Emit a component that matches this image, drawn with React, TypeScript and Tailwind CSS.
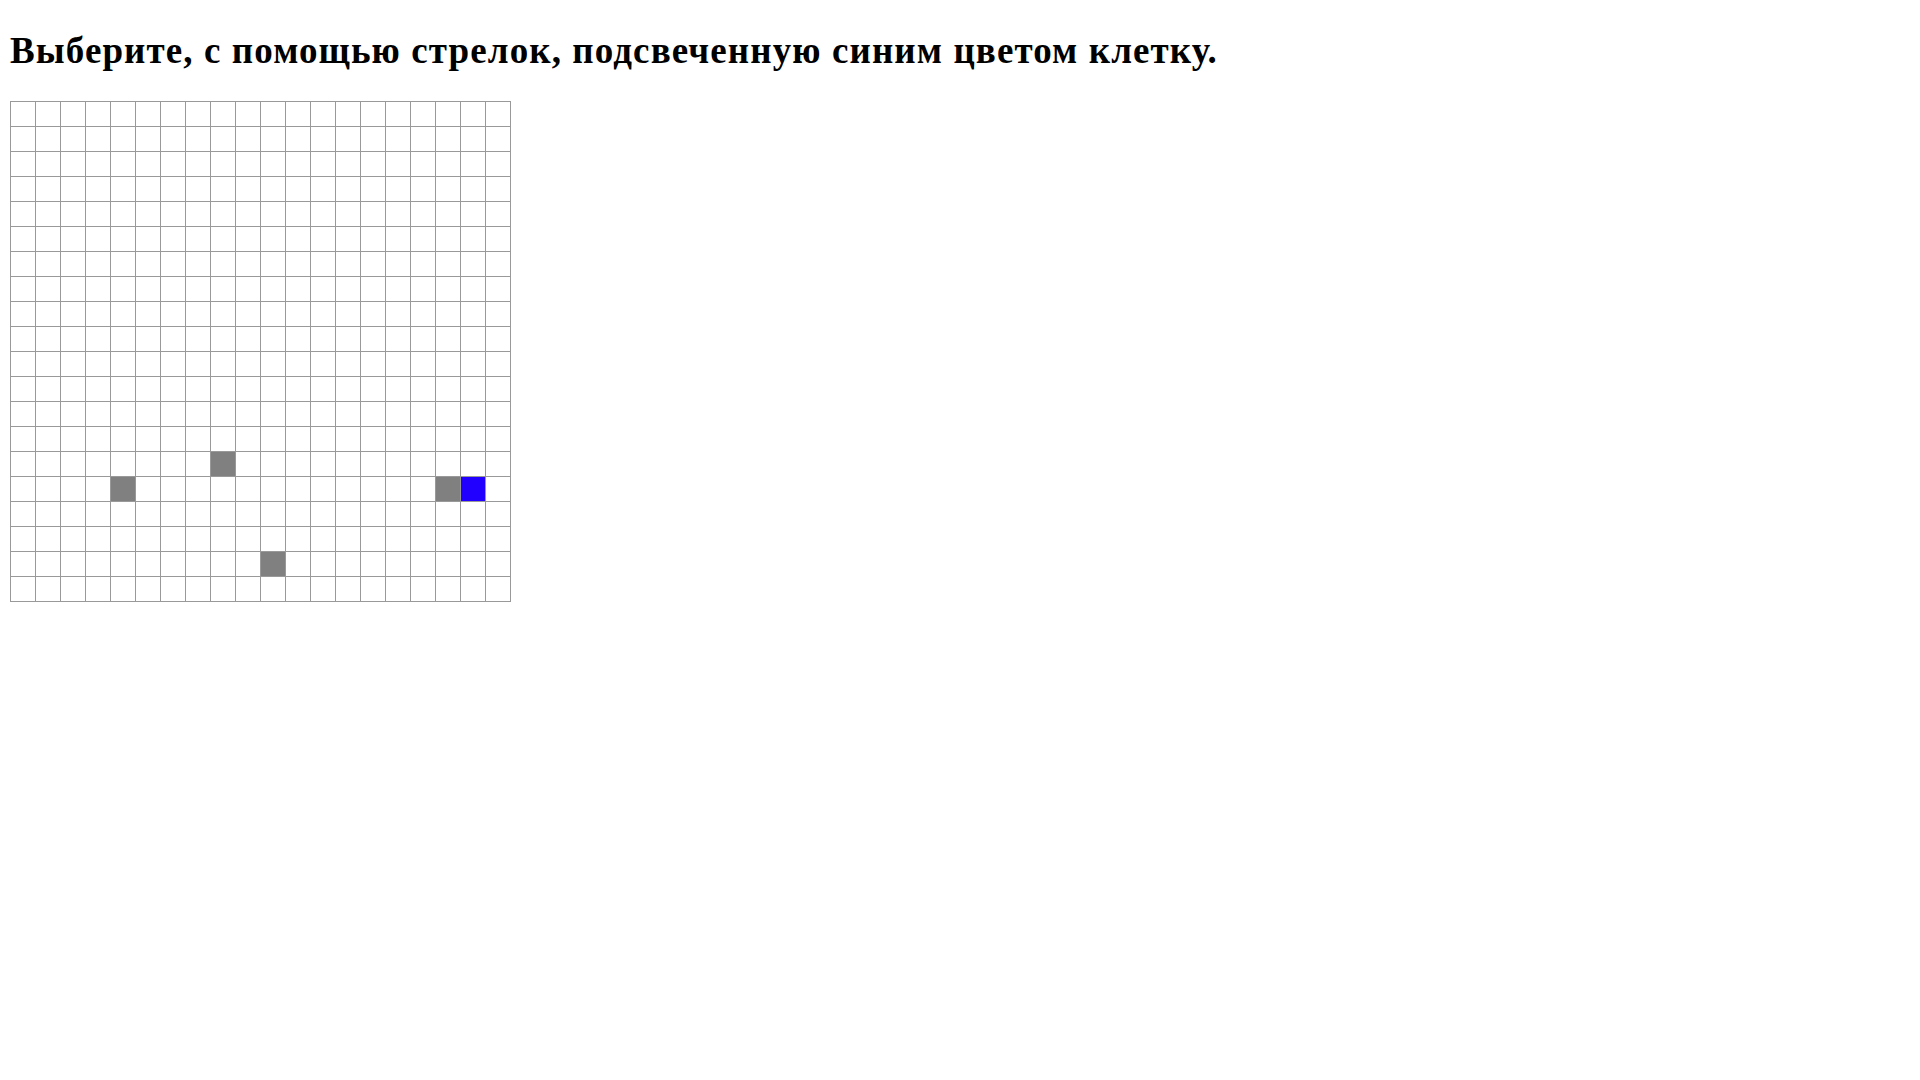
import React from 'react';

const SIZE = 20;
const gray = new Set(['14-8', '15-4', '15-17', '18-10']);
const active = '15-18';

export default function App() {
  const cells = [];
  for (let r = 0; r < SIZE; r++) {
    for (let c = 0; c < SIZE; c++) {
      const key = `${r}-${c}`;
      let cls = 'bg-white';
      if (gray.has(key)) cls = 'bg-[#808080]';
      if (key === active) cls = 'bg-[#2200ff]';
      cells.push(<div key={key} className={`w-[24px] h-[24px] ${cls}`} />);
    }
  }

  return (
    <div className="min-h-screen bg-white pl-[10px] pt-[31px] font-['Liberation_Serif',serif] text-black">
      <h1 className="text-[37px] leading-[40px] tracking-[1.1px] font-bold m-0">
        Выберите, с помощью стрелок, подсвеченную синим цветом клетку.
      </h1>
      <div className="mt-[30px] inline-grid grid-cols-[repeat(20,24px)] gap-px border border-[#999] bg-[#999]">
        {cells}
      </div>
    </div>
  );
}
